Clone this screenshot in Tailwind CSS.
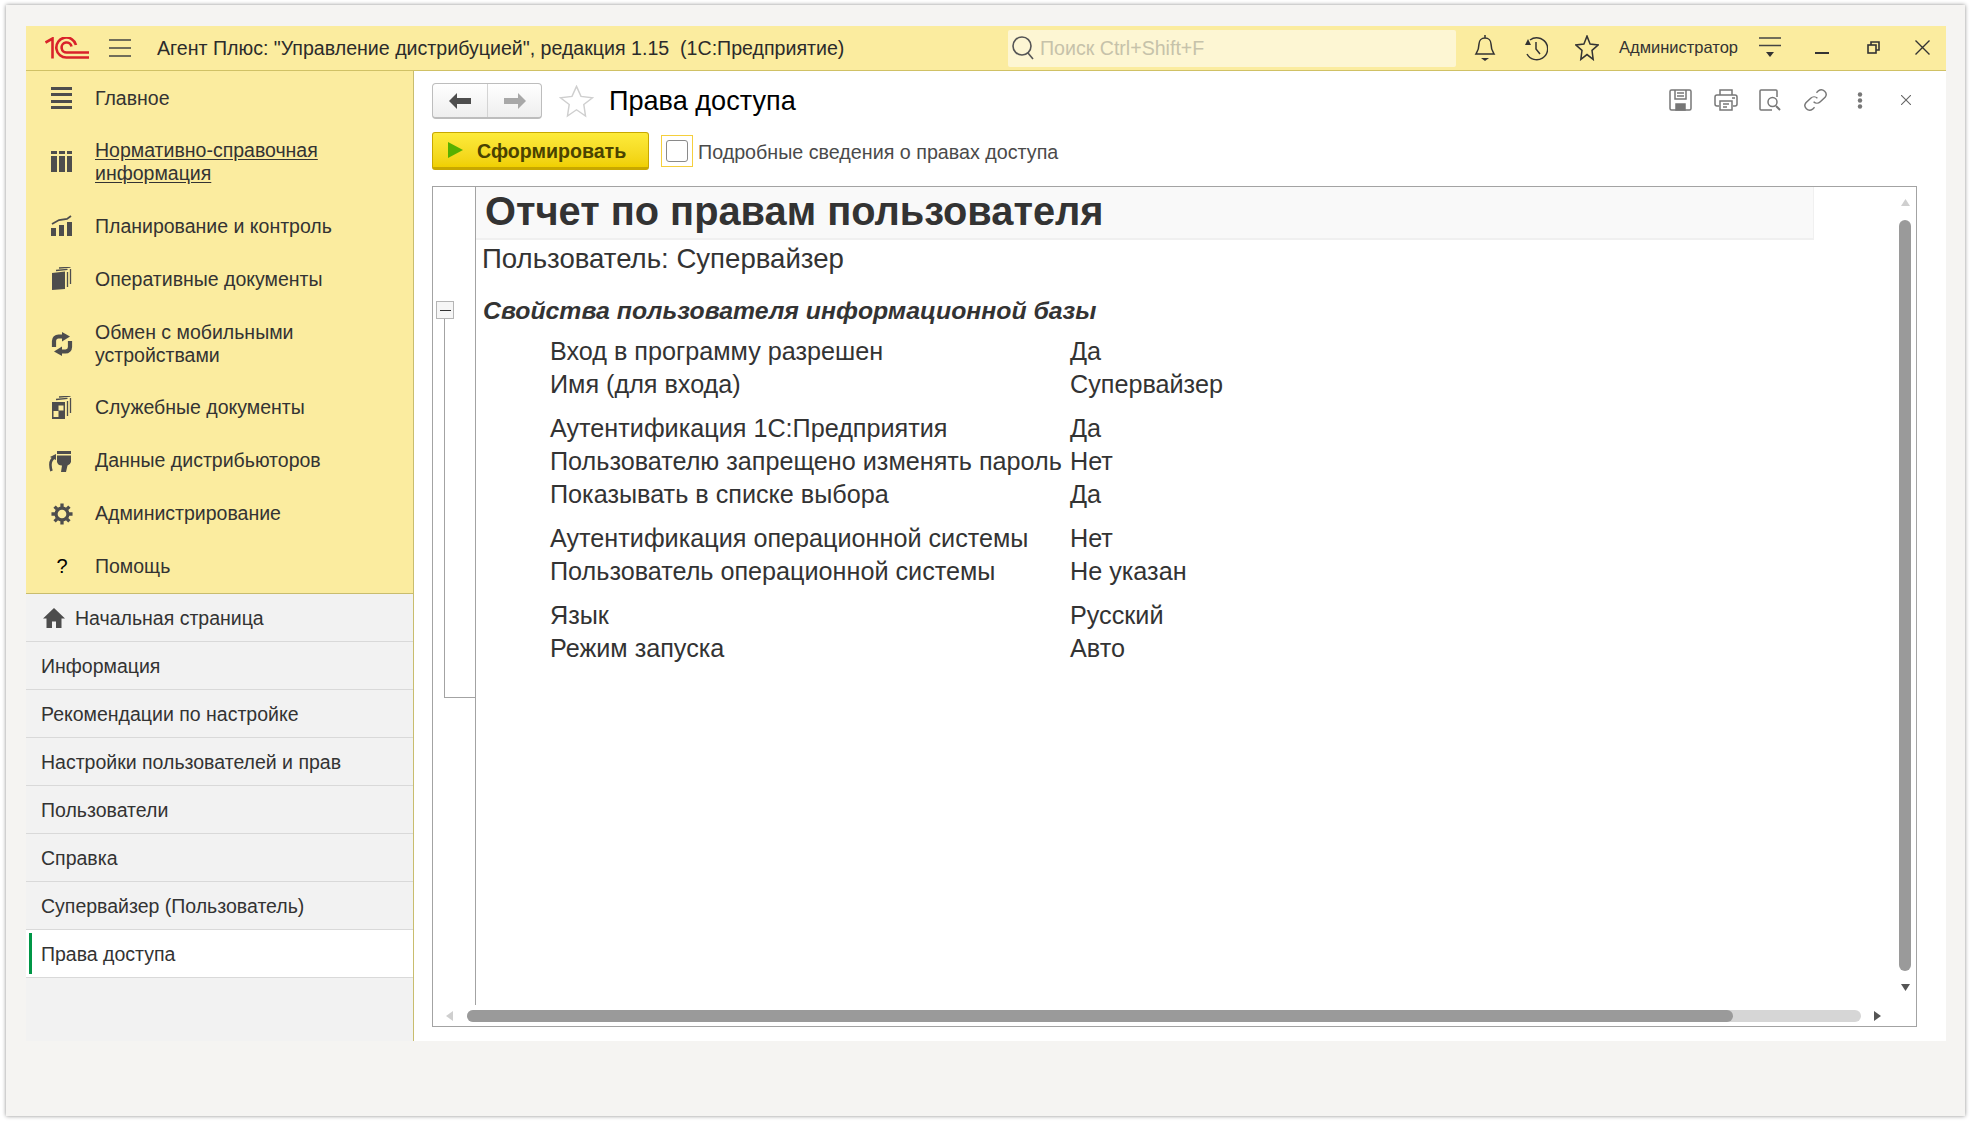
<!DOCTYPE html>
<html lang="ru">
<head>
  <meta charset="UTF-8">
  <title>Права доступа</title>
  <script src="https://cdn.jsdelivr.net/npm/@tailwindcss/browser@4"></script>
</head>
<body class="bg-white w-[1972px] h-[1122px] overflow-hidden pt-[5px] pl-[6px] font-['Liberation_Sans',Arial,sans-serif] text-[#333]">
  <div class="w-[1959px] h-[1111px] bg-[#f5f4f2] shadow-[0_0_4px_rgba(0,0,0,0.45)] pt-[21px] pl-[20px]">
    <div class="w-[1920px] h-[1015px] bg-white flex flex-col">

      <!-- шапка -->
      <header class="h-[45px] shrink-0 bg-[#fbec9f] border-b border-[#d0c165] flex items-center pl-[19px]">
        <svg class="w-[44px] h-[22px]" viewBox="0 0 44 22" fill="none" stroke="#d9222a" stroke-width="2.6">
          <path d="M0.5 5.5 L7.5 1.5 V21.5"/>
          <path d="M31 8 A10 10 0 1 0 22 20.5 H44"/>
          <path d="M26.5 9.5 A5 5 0 1 0 22 15.5 H44"/>
        </svg>
        <svg class="w-[22px] h-[18px] ml-[20px]" viewBox="0 0 22 18" stroke="#444" stroke-width="1.6"><path d="M0 1h22M0 9h22M0 17h22"/></svg>
        <div class="w-[877px] pl-[26px] pt-px text-[19.600px] whitespace-pre text-[#2b2b2b]">Агент Плюс: "Управление дистрибуцией", редакция 1.15  (1С:Предприятие)</div>
        <div class="w-[448px] h-[37px] bg-[#fdf6d3] rounded-[2px] flex items-center pl-[3px] text-[19.600px] text-[#c6c2aa]">
          <svg class="w-[25px] h-[26px] mr-[4px]" viewBox="0 0 25 26" fill="none" stroke="#555" stroke-width="1.6"><circle cx="11" cy="11" r="9"/><path d="M17 18l5 6"/></svg>
          <span class="pt-px">Поиск Ctrl+Shift+F</span>
        </div>
        <svg class="w-[24px] h-[28px] ml-[17px]" viewBox="0 0 24 28" fill="none" stroke="#333" stroke-width="1.5"><path d="M12 1v3M3 20c2-3 3-5 3-10 0-3.500 2.500-6 6-6s6 2.500 6 6c0 5 1 7 3 10z"/><path d="M8 24h8l-4 3z" fill="#333" stroke="none"/></svg>
        <svg class="w-[24px] h-[26px] ml-[27px]" viewBox="0 0 24 26" fill="none" stroke="#333" stroke-width="1.5"><path d="M6 5a11 11 0 1 1-3 14"/><path d="M12 7v7l4 5"/><path d="M1 10l3-6 3 6z" fill="#333" stroke="none"/></svg>
        <svg class="w-[24px] h-[26px] ml-[27px]" viewBox="0 0 24 24" preserveAspectRatio="none" fill="none" stroke="#333" stroke-width="1.5"><polygon points="12 1 15.090 8.260 23 9.270 17 14.140 18.180 22.500 12 18 5.820 22.500 7 14.140 1 9.270 8.910 8.260"/></svg>
        <div class="w-[120px] ml-[20px] text-[16.500px] whitespace-nowrap text-[#333] -mt-[2px]">Администратор</div>
        <svg class="w-[22px] h-[22px] ml-[20px]" viewBox="0 0 22 22" stroke="#444" stroke-width="1.5"><path d="M0 1h22M0 8.500h22" /><path d="M7 15h8l-4 5z" fill="#333" stroke="none"/></svg>
        <svg class="w-[14px] h-[14px] ml-[34px]" viewBox="0 0 14 14"><rect y="11" width="14" height="2" fill="#333"/></svg>
        <svg class="w-[13px] h-[13px] ml-[38px] -mt-[1px]" viewBox="0 0 13 13" fill="none" stroke="#333" stroke-width="1.6"><rect x="1" y="4" width="8" height="8"/><path d="M4 4V1h8v8H9"/></svg>
        <svg class="w-[15px] h-[15px] ml-[35px] -mt-[1px]" viewBox="0 0 15 15" stroke="#333" stroke-width="1.4"><path d="M0.500 0.500l14 14M14.500 0.500l-14 14"/></svg>
      </header>

      <div class="flex flex-1 min-h-0">
        <!-- панель разделов -->
        <aside class="w-[388px] shrink-0 bg-[#f2f2f2] border-r border-[#c9bd6e] flex flex-col text-[19.500px] leading-[23px]">
          <nav class="bg-[#fbec9f] border-b border-[#c9bd6e] h-[523px] shrink-0">
            <a class="h-[53px] flex items-center pl-[25px] pt-px gap-[22px]">
              <svg class="w-[22px] h-[24px]" viewBox="0 0 22 24" fill="#4d4d4d"><rect y="1" width="21" height="3"/><rect y="7" width="21" height="3"/><rect y="14" width="21" height="3"/><rect y="20" width="21" height="3"/></svg>
              Главное
            </a>
            <a class="h-[75.5px] flex items-center pl-[25px] pt-px gap-[22px]">
              <svg class="w-[22px] h-[22px]" viewBox="0 0 22 22" fill="#4d4d4d"><rect y="0" width="6" height="3"/><rect x="8" y="0" width="6" height="3"/><rect x="16" y="0" width="5" height="3"/><rect y="5" width="6" height="16"/><rect x="8" y="5" width="6" height="16"/><rect x="16" y="5" width="5" height="16"/></svg>
              <span class="underline underline-offset-[2px]">Нормативно-справочная<br>информация</span>
            </a>
            <a class="h-[53px] flex items-center pl-[25px] gap-[22px]">
              <svg class="w-[22px] h-[22px]" viewBox="0 0 22 22" fill="#4d4d4d"><rect y="13" width="5" height="8"/><rect x="8" y="10" width="5" height="11"/><rect x="16" y="7" width="5" height="14"/><path d="M1 9l7-4 8-1 4-3" fill="none" stroke="#4d4d4d" stroke-width="1.800"/></svg>
              Планирование и контроль
            </a>
            <a class="h-[53px] flex items-center pl-[25px] gap-[22px]">
              <svg class="w-[22px] h-[24px]" viewBox="0 0 22 24" fill="none"><path d="M1 6l13-1.500V22L1 23z" fill="#4d4d4d"/><path d="M16.500 5v15M19.500 2v15M5 3.500l11.500-1.200M8 1l11.500-.8" stroke="#4d4d4d" stroke-width="1.300"/></svg>
              Оперативные документы
            </a>
            <a class="h-[75.5px] flex items-center pl-[25px] pt-px gap-[22px]">
              <svg class="w-[22px] h-[24px]" viewBox="0 0 22 24" fill="none" stroke="#4d4d4d" stroke-width="4.200"><path d="M3 15V9a4.500 4.500 0 0 1 4.500-4.500H13"/><path d="M19 9v6a4.500 4.500 0 0 1-4.500 4.500H9"/><path d="M11 0l8 4.500-8 5z" fill="#4d4d4d" stroke="none"/><path d="M11 14.500v9.500l-8-4.500z" fill="#4d4d4d" stroke="none"/></svg>
              <span>Обмен с мобильными<br>устройствами</span>
            </a>
            <a class="h-[53px] flex items-center pl-[25px] gap-[22px]">
              <svg class="w-[22px] h-[24px]" viewBox="0 0 22 24" fill="none"><path d="M1 6h13v17H1z" fill="#4d4d4d"/><path d="M7.500 9.500h5v5h-5zM2.500 15h5v6h-5z" fill="#fbec9f"/><path d="M16.500 5v15M19.500 2v15M5 3.500l11.500-1.200M8 1l11.500-.8" stroke="#4d4d4d" stroke-width="1.300"/></svg>
              Служебные документы
            </a>
            <a class="h-[53px] flex items-center pl-[25px] gap-[22px]">
              <svg class="w-[24px] h-[24px] -ml-[2px]" viewBox="0 0 24 24" fill="none"><path d="M8 2h14v3H8zM8 6.500h14V13a5 5 0 0 1-3.500 3.500L17 23h-5l1-6.500A5 5 0 0 1 8 13z" fill="#4d4d4d"/><path d="M6 8C2 10 0 14 2.500 22" stroke="#4d4d4d" stroke-width="2.600"/><path d="M1 8l6-3v6z" fill="#4d4d4d"/></svg>
              <span>Данные дистрибьюторов</span>
            </a>
            <a class="h-[53px] flex items-center pl-[25px] gap-[22px]">
              <svg class="w-[22px] h-[22px]" viewBox="0 0 24 24" fill="#4d4d4d" stroke="#4d4d4d"><path fill="none" stroke-width="3.500" d="M12 5.500a6.500 6.500 0 1 0 0 13 6.500 6.500 0 0 0 0-13z"/><path stroke-width="3.600" d="M12 0.500v4M12 19.500v4M0.500 12h4M19.500 12h4M3.900 3.900l2.800 2.800M17.300 17.300l2.800 2.800M3.900 20.100l2.800-2.800M17.300 6.700l2.800-2.800"/></svg>
              Администрирование
            </a>
            <a class="h-[53px] flex items-center pl-[25px] gap-[22px]">
              <span class="w-[22px] text-center text-black text-[20px]">?</span>
              Помощь
            </a>
          </nav>
          <a class="h-[48px] shrink-0 flex items-center pl-[17px] pt-px gap-[10px] border-b border-[#d9d9d9]">
            <svg class="w-[22px] h-[20px]" viewBox="0 0 22 20" fill="#4d4d4d"><path d="M11 0L0 10.500h3.500V20h5.500v-6.500h4V20h5.500V10.500H22z"/></svg>
            Начальная страница
          </a>
          <a class="h-[48px] shrink-0 flex items-center pl-[15px] pt-px border-b border-[#d9d9d9]">Информация</a>
          <a class="h-[48px] shrink-0 flex items-center pl-[15px] pt-px border-b border-[#d9d9d9]">Рекомендации по настройке</a>
          <a class="h-[48px] shrink-0 flex items-center pl-[15px] pt-px border-b border-[#d9d9d9]">Настройки пользователей и прав</a>
          <a class="h-[48px] shrink-0 flex items-center pl-[15px] pt-px border-b border-[#d9d9d9]">Пользователи</a>
          <a class="h-[48px] shrink-0 flex items-center pl-[15px] pt-px border-b border-[#d9d9d9]">Справка</a>
          <a class="h-[48px] shrink-0 flex items-center pl-[15px] pt-px border-b border-[#d9d9d9]">Супервайзер (Пользователь)</a>
          <a class="h-[48px] shrink-0 flex items-center pl-[3px] bg-white border-b border-[#d9d9d9]">
            <span class="w-[3px] h-[41px] bg-[#009646] mr-[9px]"></span>
            <span class="pt-px">Права доступа</span>
          </a>
        </aside>

        <!-- форма -->
        <main class="flex-1 min-w-0 pl-[18px] pt-[12px] bg-white">
          <div class="h-[36px] flex items-center">
            <div class="w-[110px] h-[36px] flex rounded-[4px] border border-[#bdbdbd] border-b-[2px] bg-gradient-to-b from-white to-[#eeeeee]">
              <div class="w-[55px] flex items-center justify-center border-r border-[#d4d4d4]">
                <svg class="w-[22px] h-[16px]" viewBox="0 0 22 16" fill="#4d4d4d"><path d="M8 0v5h14v6H8v5L0 8z"/></svg>
              </div>
              <div class="flex-1 flex items-center justify-center">
                <svg class="w-[22px] h-[16px]" viewBox="0 0 22 16" fill="#a8a8a8"><path d="M14 0v5H0v6h14v5l8-8z"/></svg>
              </div>
            </div>
            <svg class="w-[35px] h-[33px] ml-[17px]" viewBox="0 0 24 24" preserveAspectRatio="none" fill="none" stroke="#cfcfcf" stroke-width="1"><polygon points="12 1 15.090 8.260 23 9.270 17 14.140 18.180 22.500 12 18 5.820 22.500 7 14.140 1 9.270 8.910 8.260"/></svg>
            <h1 class="ml-[15px] pt-px text-[27.100px] text-black">Права доступа</h1>
            <div class="ml-auto pr-[35px] -mt-[2px] flex items-center">
              <svg class="w-[23px] h-[22px]" viewBox="0 0 23 22" fill="none" stroke="#777" stroke-width="1.500"><path d="M2.500 1h18a1.500 1.500 0 0 1 1.500 1.500v17a1.500 1.500 0 0 1-1.500 1.500h-18A1.500 1.500 0 0 1 1 19.500v-17A1.500 1.500 0 0 1 2.500 1z"/><path d="M6 1v9h11V1M8 4h7M8 7h7"/><path d="M7 15h9v6H7z" fill="#777"/></svg>
              <svg class="w-[24px] h-[22px] ml-[22px]" viewBox="0 0 24 22" fill="none" stroke="#777" stroke-width="1.500"><path d="M6 6V1h12v5"/><path d="M5 17H3a2 2 0 0 1-2-2V8a2 2 0 0 1 2-2h18a2 2 0 0 1 2 2v7a2 2 0 0 1-2 2h-2"/><path d="M6 12h12v9H6zM9 15h6M9 18h4M18 9h3"/></svg>
              <svg class="w-[22px] h-[22px] ml-[21px]" viewBox="0 0 22 22" fill="none" stroke="#777" stroke-width="1.500"><path d="M18 8V2a1 1 0 0 0-1-1H2a1 1 0 0 0-1 1v18a1 1 0 0 0 1 1h11"/><circle cx="13.500" cy="13" r="4.500"/><path d="M17 17l4 4" stroke-width="2"/></svg>
              <svg class="w-[23px] h-[22px] ml-[23px]" viewBox="0 0 24 24" preserveAspectRatio="none" fill="none" stroke="#777" stroke-width="1.500"><path d="M10 14a5 5 0 0 0 7 0l5-5a5 5 0 0 0-7-7l-2 2"/><path d="M14 10a5 5 0 0 0-7 0l-5 5a5 5 0 0 0 7 7l2-2"/></svg>
              <svg class="w-[6px] h-[17px] ml-[30px]" viewBox="0 0 6 17" fill="#777"><circle cx="3" cy="2.500" r="2.200"/><circle cx="3" cy="8.500" r="2.200"/><circle cx="3" cy="14.500" r="2.200"/></svg>
              <svg class="w-[10px] h-[10px] ml-[38px]" viewBox="0 0 10 10" stroke="#666" stroke-width="1.100"><path d="M0 0l10 10M10 0L0 10"/></svg>
            </div>
          </div>

          <div class="h-[38px] mt-[13px] flex items-center">
            <button class="w-[217px] h-[38px] rounded-[3px] border border-[#c8a800] border-b-[3px] bg-gradient-to-b from-[#fdeb3a] to-[#f0d000] flex items-center pl-[15px]">
              <svg class="w-[15px] h-[16px]" viewBox="0 0 15 16" fill="#57b000"><path d="M0 0l15 8-15 8z"/></svg>
              <span class="ml-[14px] pt-[3px] font-bold text-[19.600px] text-[#4a4300]">Сформировать</span>
            </button>
            <div class="w-[32px] h-[32px] ml-[12px] border border-[#f5cf3d] flex items-center justify-center">
              <div class="w-[22px] h-[22px] rounded-[3px] border border-[#8a8a8a] bg-white"></div>
            </div>
            <span class="ml-[5px] pt-[3px] text-[19.700px] text-[#4a4a4a]">Подробные сведения о правах доступа</span>
          </div>

          <!-- табличный документ -->
          <div class="w-[1485px] h-[841px] mt-[16px] border border-[#a3a3a3] flex">
            <div class="w-[1460px] flex flex-col">
              <div class="h-[818px] flex">
                <div class="w-[43px] border-r border-[#a3a3a3] pt-[114px] pl-[3px]">
                  <div class="w-[18px] h-[18px] border border-[#b5b5b5] bg-[#f6f6f6] flex items-center justify-center">
                    <div class="w-[11px] h-px bg-[#333]"></div>
                  </div>
                  <div class="w-[32px] h-[379px] ml-[8px] border-l border-b border-[#a3a3a3]"></div>
                </div>
                <div class="flex-1 min-w-0">
                  <div class="w-[1338px] h-[53px] bg-[#f9f9f9] border-b-2 border-r border-[#f0f0f0] pl-[9px] text-[39.800px] leading-[49px] font-bold">Отчет по правам пользователя</div>
                  <div class="pl-[6px] mt-[2px] text-[27.600px] leading-[33px]">Пользователь: Супервайзер</div>
                  <div class="pl-[7px] mt-[19px] text-[24.800px] leading-[33px] font-bold italic">Свойства пользователя информационной базы</div>
                  <dl class="pl-[74px] mt-[8px] text-[25.200px] leading-[33px] grid grid-cols-[520px_1fr]">
                    <dt>Вход в программу разрешен</dt><dd>Да</dd>
                    <dt>Имя (для входа)</dt><dd>Супервайзер</dd>
                    <dt class="mt-[11px]">Аутентификация 1С:Предприятия</dt><dd class="mt-[11px]">Да</dd>
                    <dt>Пользователю запрещено изменять пароль</dt><dd>Нет</dd>
                    <dt>Показывать в списке выбора</dt><dd>Да</dd>
                    <dt class="mt-[11px]">Аутентификация операционной системы</dt><dd class="mt-[11px]">Нет</dd>
                    <dt>Пользователь операционной системы</dt><dd>Не указан</dd>
                    <dt class="mt-[11px]">Язык</dt><dd class="mt-[11px]">Русский</dd>
                    <dt>Режим запуска</dt><dd>Авто</dd>
                  </dl>
                </div>
              </div>
              <div class="h-[21px] flex items-center pl-[13px]">
                <svg class="w-[7px] h-[10px]" viewBox="0 0 7 10" fill="#cfcfcf"><path d="M7 0v10L0 5z"/></svg>
                <div class="w-[1394px] h-[12px] ml-[14px] rounded-full bg-[#d6d6d6]">
                  <div class="h-full rounded-full bg-[#9a9a9a]" style="width: 1266px"></div>
                </div>
                <svg class="w-[7px] h-[10px] ml-[13px]" viewBox="0 0 7 10" fill="#555"><path d="M0 0v10l7-5z"/></svg>
              </div>
            </div>
            <div class="flex-1 flex flex-col items-center pt-[12px] pl-[1px]">
              <svg class="w-[9px] h-[7px]" viewBox="0 0 9 7" fill="#cfcfcf"><path d="M4.500 0L9 7H0z"/></svg>
              <div class="w-[12px] h-[751px] mt-[14px] rounded-full bg-[#9a9a9a]"></div>
              <svg class="w-[9px] h-[7px] mt-[13px]" viewBox="0 0 9 7" fill="#555"><path d="M0 0h9L4.500 7z"/></svg>
            </div>
          </div>
        </main>
      </div>
    </div>
  </div>
</body>
</html>
